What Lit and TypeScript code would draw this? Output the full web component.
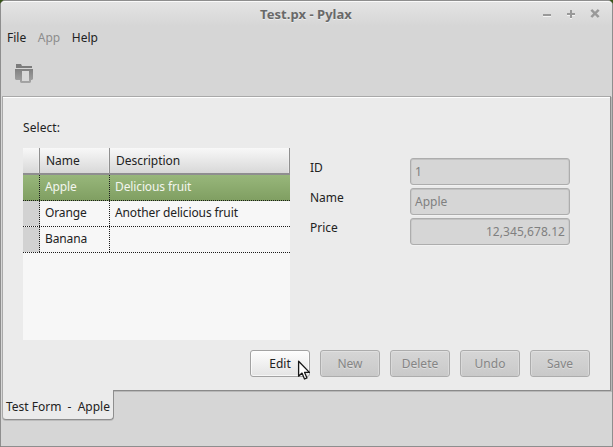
import { LitElement, html, css } from "lit";
import { customElement } from "lit/decorators.js";
import { classMap } from "lit/directives/class-map.js";

const rows = [
  { name: "Apple", description: "Delicious fruit", selected: true },
  { name: "Orange", description: "Another delicious fruit", selected: false },
  { name: "Banana", description: "", selected: false },
];

const fields = [
  { label: "ID", value: "1", numeric: false },
  { label: "Name", value: "Apple", numeric: false },
  { label: "Price", value: "12,345,678.12", numeric: true },
];

const actions = [
  { label: "Edit", enabled: true },
  { label: "New", enabled: false },
  { label: "Delete", enabled: false },
  { label: "Undo", enabled: false },
  { label: "Save", enabled: false },
];

@customElement("title-bar")
class TitleBar extends LitElement {
  static styles = css`
    :host {
      display: grid;
      grid-template-columns: 1fr auto 1fr;
      height: 25px;
      border-top: 1px solid #fafafa;
      border-radius: 4px 4px 0 0;
      background: linear-gradient(#e4e4e4, #d6d6d6);
    }
    .title {
      grid-column: 2;
      font-size: 13px;
      font-weight: bold;
      line-height: 24px;
      color: #696969;
      text-shadow: 0 1px #ececec;
      padding-right: 1px;
      letter-spacing: 0.04px;
    }
    .controls {
      justify-self: end;
      margin: 6px 10px 0 0;
    }
    svg { display: block; }
  `;
  render() {
    return html`
      <div class="title">Test.px - Pylax</div>
      <svg class="controls" width="60" height="12" viewBox="0 0 60 12" fill="none" stroke-width="2">
        <g stroke="#f4f4f4" transform="translate(0 1)">
          <path d="M1 7H9M25 6H33M29 2V10M49.5 1.5L56.5 8.5M56.5 1.5L49.5 8.5" />
        </g>
        <path stroke="#999" d="M1 7H9M25 6H33M29 2V10" />
        <path stroke="#999" stroke-width="2.5" d="M49.3 1.8L56.7 9.2M56.7 1.8L49.3 9.2" />
      </svg>
    `;
  }
}

@customElement("fruit-table")
class FruitTable extends LitElement {
  static styles = css`
    :host {
      display: block;
      width: 267px;
      height: 192px;
      background: #f7f7f7;
    }
    .row {
      display: grid;
      grid-template-columns: 17px 70px 180px;
      height: 26px;
      box-sizing: border-box;
      line-height: 25px;
    }
    .head {
      height: 27px;
      background: linear-gradient(#f8f8f8, #d8d8d8);
      border-bottom: 2px solid #8f8e90;
    }
    .head > div {
      border-right: 1px solid #909090;
      box-shadow: inset -1px 0 #fafafa55;
      padding-left: 6px;
      letter-spacing: -0.04px;
    }
    .body > div {
      padding-left: 5px;
      line-height: 23px;
      letter-spacing: -0.12px;
    }
    .body {
      background: repeating-linear-gradient(90deg, #1c1c1c 0 1px, transparent 1px 2px) 0 100% / 100% 1px no-repeat;
    }
    .body > div:not(:last-child) {
      background: repeating-linear-gradient(#1c1c1c 0 1px, transparent 1px 2px) 100% 0 / 1px 100% no-repeat;
    }
    .body > div:first-child {
      margin-bottom: 1px;
      background-color: #d2d2d2;
    }
    .selected {
      color: #f3f6ef;
      background:
        repeating-linear-gradient(90deg, #1c1c1c 0 1px, transparent 1px 2px) 0 100% / 100% 1px no-repeat,
        linear-gradient(#98b77b, #7f9e61);
    }
    .selected > div:first-child { background-color: transparent !important; }
  `;
  render() {
    return html`
      <div class="row head"><div></div><div>Name</div><div>Description</div></div>
      ${rows.map(
        (r) => html`<div class=${classMap({ row: true, body: true, selected: r.selected })}>
          <div></div><div>${r.name}</div><div>${r.description}</div>
        </div>`
      )}
    `;
  }
}

@customElement("app-root")
class AppRoot extends LitElement {
  static styles = css`
    * { box-sizing: border-box; }
    :host {
      display: block;
      width: 613px;
      height: 447px;
      background: #365317;
      font: 12px "Noto Sans", sans-serif;
      color: #222;
      overflow: hidden;
    }
    .window {
      display: flex;
      flex-direction: column;
      height: 447px;
      border: 1px solid #8e8e8e;
      border-radius: 5px 5px 0 0;
      background: #d6d6d6;
    }
    .menu {
      display: flex;
      gap: 11.6px;
      height: 24px;
      padding-left: 6px;
      line-height: 23px;
    }
    .muted { color: #8d8d8d; }
    .tools {
      height: 46px;
      padding: 14px 0 0 14px;
    }
    svg { display: block; }
    .panel {
      height: 295px;
      margin: 0 1px;
      border: 1px solid #a9a9a9;
      border-bottom-color: #8a8a8a;
      border-right-color: #8a8a8a;
      box-shadow: inset 0 1px #fff, 1px 1px #b8b8b8;
      background: #ebebeb;
      padding: 22px 20px 0;
    }
    .select { line-height: 17px; height: 29px; letter-spacing: 0.06px; }
    .content { display: flex; gap: 20px; }
    .form {
      flex: 1;
      padding-top: 10px;
      display: grid;
      grid-template-columns: 100px 160px;
      grid-auto-rows: 30px;
    }
    .label { line-height: 19px; }
    .input {
      height: 27px;
      padding: 0 4px;
      border: 1px solid #adadad;
      border-radius: 3px;
      background: #d6d6d6;
      box-shadow: inset 0 1px #c2c2c2, inset 1px 0 #cbcbcb, inset -1px 0 #cbcbcb, 0 1px #f2f2f2;
      color: #808080;
      line-height: 26px;
    }
    .numeric { text-align: right; letter-spacing: 0.06px; }
    .actions {
      display: flex;
      gap: 10px;
      justify-content: flex-end;
      margin-top: 10px;
    }
    .button {
      width: 60px;
      height: 27px;
      border: 1px solid #acacac;
      border-radius: 3px;
      background: linear-gradient(#d6d6d6, #c9c9c9);
      box-shadow: inset 0 1px #e0e0e0, inset 1px 0 #d9d9d9, inset -1px 0 #d9d9d9;
      color: #858585;
      line-height: 25px;
      text-align: center;
      text-shadow: 0 1px #dedede;
    }
    .enabled {
      background: linear-gradient(#fdfdfd, #e4e4e4);
      border-color: #a2a2a2;
      box-shadow: inset 0 0 0 1px #ffffffaa;
      color: #222;
      text-shadow: none;
    }
    .tab {
      width: 112px;
      height: 30px;
      margin: -1px 0 0 1px;
      padding-left: 3px;
      border: 1px solid #8e8e8e;
      border-top: 0;
      border-left-color: #a9a9a9;
      border-radius: 0 0 4px 4px;
      background: #ebebeb;
      box-shadow: 0 1px #bcbcbc;
      line-height: 33px;
      letter-spacing: -0.01px;
      white-space: pre;
      z-index: 1;
    }
    .cursor { position: absolute; left: 297px; top: 360px; }
  `;
  render() {
    return html`
      <div class="window">
        <title-bar></title-bar>
        <div class="menu"><span>File</span><span class="muted">App</span><span>Help</span></div>
        <div class="tools">
          <svg width="18" height="19" viewBox="0 0 18 19">
            <defs>
              <linearGradient id="folder" x1="0" y1="0" x2="0" y2="1">
                <stop offset="0" stop-color="#808080" />
                <stop offset="1" stop-color="#a6a6a6" />
              </linearGradient>
            </defs>
            <path fill="#7c7c7c" d="M1 0H6L7 2H17V4H1Z" />
            <path fill="url(#folder)" fill-rule="evenodd" d="M0 5H18V15L17 16H16V18L15 19H6L5 18V16H1L0 15ZM7 7V17H14V7Z" />
            <path fill="#d9d9d9" d="M7 7H14V17H7Z" />
          </svg>
        </div>
        <div class="panel">
          <div class="select">Select:</div>
          <div class="content">
            <fruit-table></fruit-table>
            <div class="form">
              ${fields.map(
                (f) => html`<div class="label">${f.label}</div>
                  <div class=${classMap({ input: true, numeric: f.numeric })}>${f.value}</div>`
              )}
            </div>
          </div>
          <div class="actions">
            ${actions.map(
              (a) => html`<div class=${classMap({ button: true, enabled: a.enabled })}>${a.label}</div>`
            )}
          </div>
        </div>
        <div class="tab">Test Form  -  Apple</div>
      </div>
      <svg class="cursor" width="14" height="22" viewBox="0 0 14 22">
        <path fill="#fff" stroke="#161616" stroke-width="1.3" stroke-linejoin="round"
          d="M1.6 1.2V16.2L5 13.1L7.5 19L10 17.9L7.6 12.4H12.4Z" />
      </svg>
    `;
  }
}
